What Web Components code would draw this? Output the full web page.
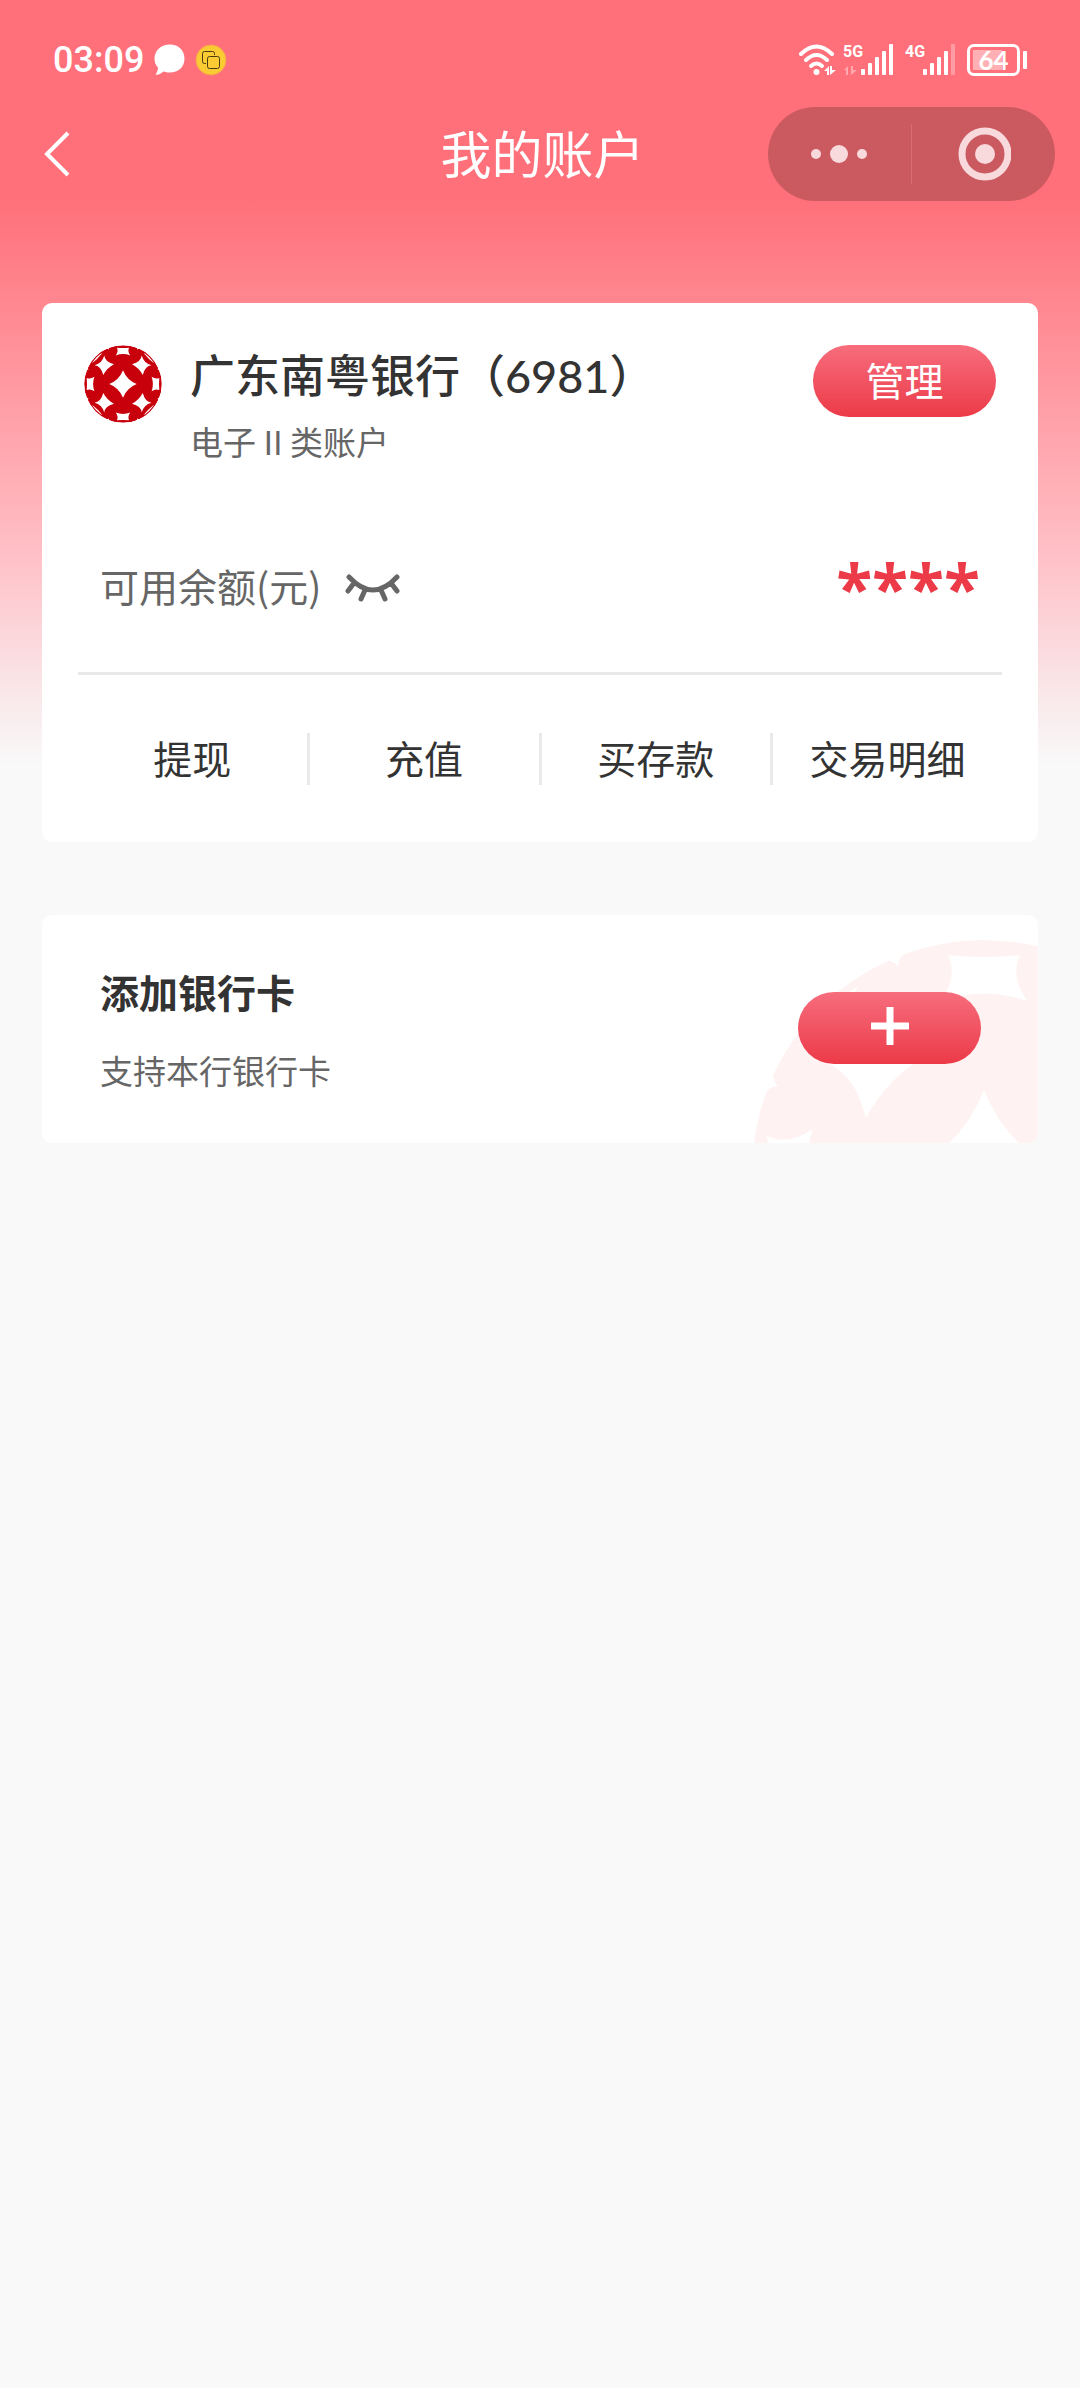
<!DOCTYPE html>
<html lang="zh-CN">
<head>
<meta charset="utf-8">
<meta name="viewport" content="width=device-width, initial-scale=1">
<title>我的账户</title>
<style>
    body{
        margin: 0;
        font-family: "Noto Sans CJK SC", sans-serif;
        color: #333;
        --red: #ec3a48;
        --grey: #666;
        --line: #e9e9e9;
        background: #f9f9f9;
    }
</style>
</head>
<body>

<!-- one logo drawing, used small in red and large as a pale watermark -->
<template id="bank-logo">
    <style>
        :host{ display: block; color: #c7000b; }
        svg{ display: block; width: 100%; height: 100%; }
    </style>
    <svg viewBox="-233 -233 466 466" aria-hidden="true">
        <defs>
            <g id="side">
                <path d="M-36,-217 Q0,-213 36,-217 Q26,-195 43,-171 Q0,-186 -43,-171 Q-26,-195 -36,-217Z"/>
                <path d="M-114,-212 Q-93,-214 -86,-206 Q-86,-216 -72,-224 L-90,-238Z"/>
                <path d="M114,-212 Q93,-214 86,-206 Q86,-216 72,-224 L90,-238Z"/>
                <path d="M-112,-170 Q-108,-132 -54,-118 Q-96,-96 -118,-54 Q-132,-108 -170,-112 Q-124,-124 -112,-170Z"/>
                <path d="M-178,-130 Q-151,-151 -130,-178 L-126,-186 Q-160,-163 -186,-126Z"/>
            </g>
            <mask id="holes">
                <circle r="232" fill="#fff"/>
                <path d="M0,-82 Q23,-23 82,0 Q23,23 0,82 Q-23,23 -82,0 Q-23,-23 0,-82Z"/>
                <use href="#side"/>
                <use href="#side" transform="rotate(90)"/>
                <use href="#side" transform="rotate(180)"/>
                <use href="#side" transform="rotate(270)"/>
            </mask>
        </defs>
        <circle r="232" fill="currentColor" mask="url(#holes)"/>
    </svg>
</template>

<template id="signal-bars">
    <style>
        :host{ display: block; position: relative; width: 52px; height: 32px; }
        svg{ display: block; }
        span{
            position: absolute;
            left: 0;
            top: 0;
            font: 700 16px/16px Roboto, sans-serif;
        }
    </style>
    <span><slot></slot></span>
    <svg width="52" height="32" viewBox="0 0 52 32" fill="currentColor" aria-hidden="true">
        <path class="data" opacity="0" d="M1,26 L5,22 L5,31 L3,31 L3,26Z M8,22 L10,22 L10,26 L14,26 L8,31Z"/>
        <rect x="18" y="25" width="4" height="6" rx="1"/>
        <rect x="25" y="19" width="4" height="12" rx="1"/>
        <rect x="32" y="13" width="4" height="18" rx="1"/>
        <rect x="39" y="7" width="4" height="24" rx="1"/>
        <rect class="last" x="46" y="0" width="4" height="31" rx="1"/>
    </svg>
</template>

<template id="status-bar">
    <style>
        :host{
            display: flex;
            align-items: center;
            justify-content: space-between;
            height: 95px;
            padding: 12px 53px 0 53px;
            color: #fff;
        }
        div{ display: flex; align-items: center; }
        .left{ gap: 10px; }
        time{ font: 500 36px/42px Roboto, sans-serif; }
        .wifi{ margin-right: 7px; }
        signal-bars + signal-bars{ margin: 0 10px; }
        .battery{
            box-sizing: border-box;
            width: 53px;
            height: 32px;
            border: 3px solid #fff;
            border-radius: 7px;
            justify-content: center;
            background: linear-gradient(#ffb0b5, #ffb0b5) 3px 3px / 29px 20px no-repeat;
            font: 700 26px/26px Lato, sans-serif;
        }
        .battery + i{
            width: 4px;
            height: 18px;
            margin-left: 3px;
            border-radius: 1px;
            background: #fff;
        }
    </style>
    <div class="left">
        <time>03:09</time>
        <svg width="31" height="31" viewBox="0 0 31 31" fill="#fff" aria-hidden="true">
            <path d="M16,0.500 C24.500,0.500 30.500,6.500 30.500,14.500 C30.500,23 24.500,28.500 16,28.500 C13,28.500 11,28 9.500,27.500 C7,30 4,31 1.500,30.500 C3,28.500 4,26 4,23.500 C1.500,21 0.500,18 0.500,14.500 C0.500,6.500 7,0.500 16,0.500Z"/>
        </svg>
        <svg width="32" height="32" viewBox="0 0 32 32" fill="none" aria-hidden="true">
            <circle cx="16" cy="16" r="15" fill="#fbcb34" stroke="#f5a54c"/>
            <path d="M11,19.500 H9.500 Q7.500,19.500 7.500,17.500 V9.500 Q7.500,7.500 9.500,7.500 H17.500 Q19.500,7.500 19.500,9.500 V11" stroke="#4a3b10"/>
            <rect x="12.500" y="12.500" width="12" height="12" rx="2" stroke="#4a3b10"/>
        </svg>
    </div>
    <div>
        <svg class="wifi" width="38" height="32" viewBox="0 0 38 32" fill="none" stroke="#fff" stroke-width="4" stroke-linecap="round" aria-hidden="true">
            <path d="M3,10 Q18.500,-5 34,10"/>
            <path d="M8,16 Q18.500,6 29,16"/>
            <path d="M13,22 Q18.500,17 24,22"/>
            <circle cx="18.500" cy="28" r="3" fill="#fff" stroke="none"/>
            <path d="M26,27 L31,22 V31 H29 V27Z M32,22 H34 V26 L38,26 L32,31Z" fill="#fff" stroke="none"/>
        </svg>
        <signal-bars data>5G</signal-bars>
        <signal-bars weak>4G</signal-bars>
        <div class="battery">64</div><i></i>
    </div>
</template>

<template id="nav-bar">
    <style>
        :host{
            display: grid;
            grid-template-columns: 1fr auto 1fr;
            align-items: center;
            padding: 0 25px 0 30px;
            color: #fff;
        }
        button{ padding: 0; border: 0; background: none; color: inherit; }
        svg{ display: block; }
        .back{ justify-self: start; padding: 10px 8px; }
        h1{ margin: 0; padding-bottom: 4px; font-size: 51px; line-height: 74px; font-weight: 400; }
        .capsule{
            justify-self: end;
            display: flex;
            align-items: center;
            width: 287px;
            height: 94px;
            border-radius: 47px;
            background: #cb5a60;
            color: #f8dadd;
        }
        .capsule button{ flex: 1; height: 94px; display: grid; place-items: center; }
        .capsule i{ width: 1px; height: 60px; background: #d76c72; }
    </style>
    <button class="back" aria-label="返回">
        <svg width="36" height="48" viewBox="0 0 36 48" fill="none" stroke="currentColor" stroke-width="4" aria-hidden="true">
            <path d="M30,3 L9,24 L30,45"/>
        </svg>
    </button>
    <h1><slot></slot></h1>
    <div class="capsule">
        <button aria-label="更多">
            <svg width="58" height="20" viewBox="0 0 58 20" fill="currentColor" aria-hidden="true">
                <circle cx="5" cy="10" r="5"/><circle cx="28" cy="10" r="9"/><circle cx="51" cy="10" r="5"/>
            </svg>
        </button>
        <i></i>
        <button aria-label="关闭">
            <svg width="54" height="54" viewBox="0 0 54 54" aria-hidden="true">
                <circle cx="28" cy="27" r="23" fill="none" stroke="currentColor" stroke-width="7"/>
                <circle cx="28" cy="27" r="10" fill="currentColor"/>
            </svg>
        </button>
    </div>
</template>

<template id="pill-button">
    <style>
        :host{ display: block; flex: none; }
        button{
            display: grid;
            place-items: center;
            box-sizing: border-box;
            width: 183px;
            height: 72px;
            padding: 0 0 4px;
            border: 0;
            border-radius: 36px;
            background: linear-gradient(#f76d7d, var(--red));
            color: #fff;
            font: inherit;
            font-size: 39px;
            line-height: 56px;
        }
    </style>
    <button><slot></slot></button>
</template>

<template id="account-card">
    <style>
        :host{ display: block; padding: 42px 36px 0; border-radius: 10px; background: #fff; }
        header{ display: flex; align-items: flex-start; gap: 28px; padding: 0 6px; }
        bank-logo{ width: 78px; height: 78px; flex: none; }
        .names{ flex: 1; }
        h2{ margin: 0; font: 500 45px/62px Lato, "Noto Sans CJK SC", sans-serif; }
        p{ margin: 11px 0 0; font-size: 33px; line-height: 46px; color: var(--grey); }
        .balance{
            display: flex;
            align-items: center;
            height: 102px;
            margin-top: 72px;
            padding: 0 22px;
            font-size: 39px;
            color: var(--grey);
        }
        #label{ padding-bottom: 4px; }
        .balance button{ margin-left: 18px; padding: 6px; border: 0; background: none; color: inherit; }
        .balance svg{ display: block; }
        output{
            margin-left: auto;
            font: 700 66px/102px "Open Sans", sans-serif;
            color: var(--red);
        }
        hr{ height: 3px; margin: 34px 0 0; border: 0; background: var(--line); }
        nav{ display: flex; padding: 58px 0 57px; }
        nav button{
            flex: 1;
            box-sizing: border-box;
            height: 52px;
            padding: 0 0 4px;
            border: 0;
            background: none;
            color: inherit;
            font: inherit;
            font-size: 39px;
            line-height: 48px;
            white-space: nowrap;
        }
        nav button + button{ border-left: 3px solid var(--line); }
    </style>
    <header>
        <bank-logo></bank-logo>
        <div class="names">
            <h2><slot name="bank"></slot></h2>
            <p><slot name="type"></slot></p>
        </div>
        <pill-button>管理</pill-button>
    </header>
    <div class="balance">
        <span id="label">可用余额(元)</span>
        <button aria-label="显示余额">
            <svg width="56" height="30" viewBox="0 0 56 30" fill="none" stroke="currentColor" stroke-width="5" stroke-linecap="round" aria-hidden="true">
                <path d="M4,5 Q28,31 52,5 M9,11 L3,19 M20,18 L16,27 M36,18 L40,27 M46,11 L52,19"/>
            </svg>
        </button>
        <output aria-labelledby="label"><slot name="amount"></slot></output>
    </div>
    <hr>
    <nav></nav>
</template>

<template id="add-card">
    <style>
        :host{
            display: flex;
            align-items: center;
            justify-content: space-between;
            position: relative;
            overflow: hidden;
            padding: 48px 57px 50px 58px;
            border-radius: 10px;
            background: #fff;
        }
        /* watermark runs off the right and bottom edges of the card */
        bank-logo{
            position: absolute;
            top: 24px;
            right: -179px;
            width: 466px;
            height: 466px;
            color: #fff2f3;
        }
        .text, pill-button{ position: relative; }
        h2{ margin: 0; font-size: 39px; line-height: 56px; font-weight: 700; }
        p{ margin: 28px 0 0; font-size: 33px; line-height: 46px; color: var(--grey); }
        svg{ display: block; }
    </style>
    <bank-logo></bank-logo>
    <div class="text">
        <h2><slot name="title"></slot></h2>
        <p><slot name="hint"></slot></p>
    </div>
    <pill-button>
        <svg width="38" height="38" viewBox="0 0 38 38" fill="none" stroke="currentColor" stroke-width="7" role="img" aria-label="添加">
            <path d="M19,0 V38 M0,19 H38"/>
        </svg>
    </pill-button>
</template>

<template id="account-page">
    <style>
        :host{
            display: block;
            min-height: 100vh;
            background: linear-gradient(#ff707a 200px, #ffbcc3 540px, #f9e9eb 700px, #f9f9f9 765px);
        }
        main{ display: flex; flex-direction: column; gap: 73px; padding: 102px 42px; }
    </style>
    <status-bar></status-bar>
    <nav-bar>我的账户</nav-bar>
    <main><slot></slot></main>
</template>

<script>
    // every element clones the template that has its own tag name
    class BaseElement extends HTMLElement{
        constructor(){
            super();
            const template = document.getElementById(this.localName);
            this.attachShadow({mode: 'open'});
            this.shadowRoot.appendChild(template.content.cloneNode(true));
        }
    }

    class SignalBars extends BaseElement{
        connectedCallback(){
            if(this.hasAttribute('data')){
                this.shadowRoot.querySelector('.data').setAttribute('opacity', '0.4');
            }
            if(this.hasAttribute('weak')){
                this.shadowRoot.querySelector('.last').setAttribute('opacity', '0.3');
            }
        }
    }

    class AccountCard extends BaseElement{
        connectedCallback(){
            const nav = this.shadowRoot.querySelector('nav');
            nav.replaceChildren(...this.getAttribute('actions').split(' ').map(name => {
                const button = document.createElement('button');
                button.textContent = name;
                return button;
            }));
        }
    }

    customElements.define('bank-logo', class extends BaseElement{});
    customElements.define('signal-bars', SignalBars);
    customElements.define('status-bar', class extends BaseElement{});
    customElements.define('nav-bar', class extends BaseElement{});
    customElements.define('pill-button', class extends BaseElement{});
    customElements.define('account-card', AccountCard);
    customElements.define('add-card', class extends BaseElement{});
    customElements.define('account-page', class extends BaseElement{});
</script>

<account-page>
    <account-card actions="提现 充值 买存款 交易明细">
        <span slot="bank">广东南粤银行（6981）</span>
        <span slot="type">电子 II 类账户</span>
        <span slot="amount">****</span>
    </account-card>
    <add-card>
        <span slot="title">添加银行卡</span>
        <span slot="hint">支持本行银行卡</span>
    </add-card>
</account-page>

</body>
</html>
